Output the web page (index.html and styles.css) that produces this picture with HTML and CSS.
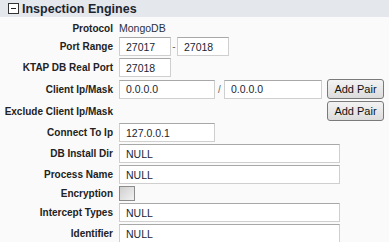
FILE: index.html
```html
<!DOCTYPE html>
<html lang="en">
<head>
  <meta charset="UTF-8" />
  <title>Inspection Engines</title>
  <link rel="stylesheet" href="styles.css">
</head>
<body>
  <div class="panel">
    <div class="panel-head">
      <span class="toggle"></span>
      <span class="panel-title">Inspection Engines</span>
    </div>
    <div class="form">
      <label>Protocol</label>
      <div class="field"><span class="value">MongoDB</span></div>

      <label>Port Range</label>
      <div class="field">
        <input class="short" type="text" value="27017">
        <span class="sep">-</span>
        <input class="short" type="text" value="27018">
      </div>

      <label>KTAP DB Real Port</label>
      <div class="field"><input class="short" type="text" value="27018"></div>

      <label>Client Ip/Mask</label>
      <div class="field">
        <input class="mid" type="text" value="0.0.0.0">
        <span class="sep slash">/</span>
        <input class="mid2" type="text" value="0.0.0.0">
        <button class="btn">Add Pair</button>
      </div>

      <label>Exclude Client Ip/Mask</label>
      <div class="field"><button class="btn btn-push">Add Pair</button></div>

      <label>Connect To Ip</label>
      <div class="field"><input class="mid" type="text" value="127.0.0.1"></div>

      <label>DB Install Dir</label>
      <div class="field"><input class="long" type="text" value="NULL"></div>

      <label>Process Name</label>
      <div class="field"><input class="long" type="text" value="NULL"></div>

      <label>Encryption</label>
      <div class="field"><span class="check"></span></div>

      <label>Intercept Types</label>
      <div class="field"><input class="long" type="text" value="NULL"></div>

      <label>Identifier</label>
      <div class="field"><input class="long" type="text" value="NULL"></div>
    </div>
  </div>
</body>
</html>
```

FILE: styles.css
```css
body {
  margin: 0;
  background-color: #fafafa;
  font-family: 'Liberation Sans', Arial, sans-serif;
  color: #222;
}

.panel-head {
  display: flex;
  align-items: center;
  height: 17px;
  background-color: #e4e7eb;
  padding-left: 8px;
}

.toggle {
  position: relative;
  width: 9px;
  height: 9px;
  border: 1px solid #333;
  background-color: #fff;
  margin-right: 3px;
}

.toggle::after {
  content: '';
  position: absolute;
  left: 2px;
  top: 4px;
  width: 5px;
  height: 1px;
  background-color: #222;
}

.panel-title {
  font-weight: bold;
  font-size: 12.5px;
  color: #1c2530;
}

.form {
  display: grid;
  grid-template-columns: 113px 1fr;
  column-gap: 6px;
  row-gap: 2px;
  padding-top: 4px;
}

.form label {
  font-weight: bold;
  font-size: 10px;
  text-align: right;
  align-self: center;
  color: #222;
}

.field {
  display: flex;
  align-items: center;
  min-height: 14px;
}

.value {
  font-size: 10.5px;
  color: #2a3140;
}

input[type="text"] {
  box-sizing: border-box;
  height: 19px;
  margin: 0;
  padding: 0 6px;
  border: 1px solid #cfcfcf;
  border-top-color: #a8a8a8;
  background-color: #fff;
  font-family: 'Liberation Sans', Arial, sans-serif;
  font-size: 10.5px;
  color: #1a1f33;
}

.short { width: 52px; }
.mid { width: 96px; }
.mid2 { width: 98px; }
.long { width: 221px; }

.sep {
  font-size: 10px;
  color: #666;
  width: 6px;
  text-align: center;
}

.slash {
  width: 9px;
}

.btn {
  box-sizing: border-box;
  width: 57px;
  height: 20px;
  margin-left: 5px;
  padding: 0;
  border: 1px solid #7a7a7a;
  border-radius: 3px;
  background: linear-gradient(#f3f3f3, #dcdcdc);
  font-family: 'Liberation Sans', Arial, sans-serif;
  font-size: 11px;
  color: #111;
}

.btn-push {
  margin-left: 208px;
}

.check {
  box-sizing: border-box;
  width: 16px;
  height: 15px;
  border: 1px solid #8c8c8c;
  background: linear-gradient(135deg, #cfcfcf, #f2f2f2);
}
```
